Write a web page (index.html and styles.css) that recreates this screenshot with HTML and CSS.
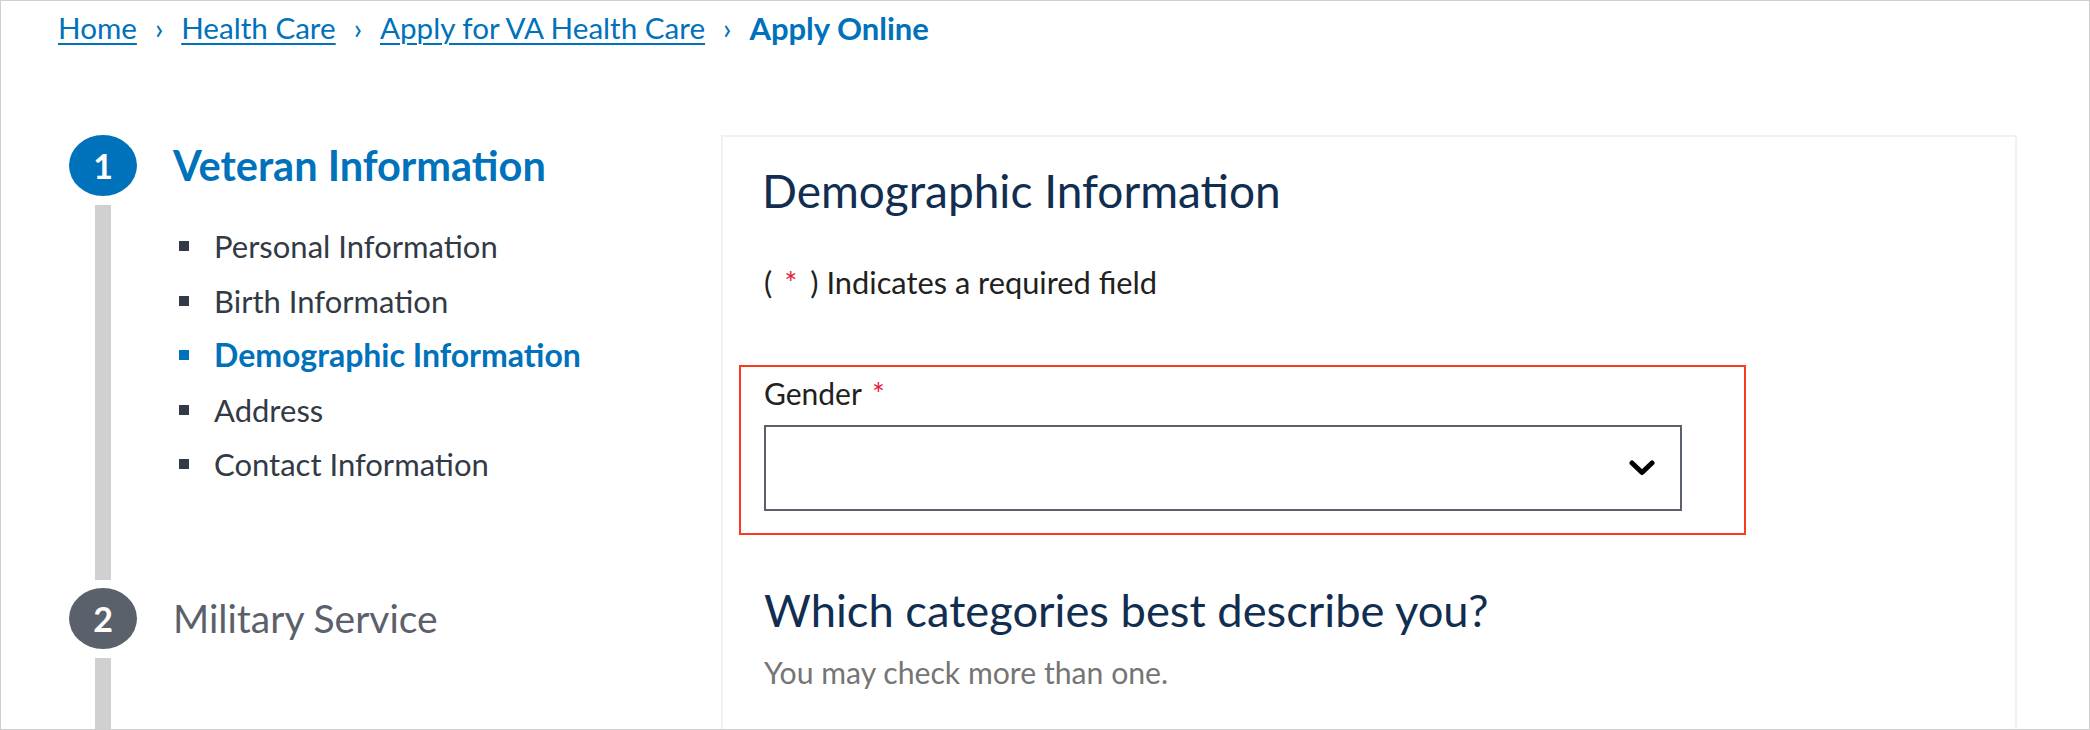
FILE: index.html
```html
<!DOCTYPE html>
<html lang="en">
<head>
<meta charset="utf-8">
<title>Apply Online - VA Health Care</title>
<link rel="stylesheet" href="styles.css">
</head>
<body>
<div class="frame">
  <nav class="breadcrumb">
    <a href="#">Home</a><span class="sep">›</span>
    <a href="#">Health Care</a><span class="sep">›</span>
    <a href="#">Apply for VA Health Care</a><span class="sep">›</span>
    <span class="current">Apply Online</span>
  </nav>

  <div class="layout">
    <div class="nav">
      <div class="step step-active">
        <div class="marker">
          <div class="circle circle-active">1</div>
          <div class="line"></div>
        </div>
        <div class="step-body">
          <div class="step-title step-title-active">Veteran Information</div>
          <ul class="substeps">
            <li>Personal Information</li>
            <li>Birth Information</li>
            <li class="current-sub">Demographic Information</li>
            <li>Address</li>
            <li>Contact Information</li>
          </ul>
        </div>
      </div>
      <div class="step step-next">
        <div class="marker">
          <div class="circle circle-inactive">2</div>
          <div class="line"></div>
        </div>
        <div class="step-body">
          <div class="step-title">Military Service</div>
        </div>
      </div>
    </div>

    <div class="card">
      <h2 class="card-title">Demographic Information</h2>
      <p class="required-note">(<span class="req req-note">*</span>) Indicates a required field</p>
      <div class="field-error">
        <label class="field-label">Gender <span class="req">*</span></label>
        <div class="select">
          <svg class="chevron" width="26" height="16" viewBox="0 0 26 16"><polyline points="3,3 13,12.5 23,3" fill="none" stroke="#000" stroke-width="5" stroke-linecap="round" stroke-linejoin="round"/></svg>
        </div>
      </div>
      <h3 class="question">Which categories best describe you?</h3>
      <p class="hint">You may check more than one.</p>
    </div>
  </div>
</div>
</body>
</html>
```

FILE: styles.css
```css
* { box-sizing: border-box; }

body {
  margin: 0;
  background: #fff;
  font-family: Lato, "Open Sans", sans-serif;
}

.frame {
  width: 2090px;
  height: 730px;
  border: 1px solid #cfcfcf;
  overflow: hidden;
  background: #fff;
}

/* Breadcrumb */
.breadcrumb {
  display: flex;
  align-items: center;
  padding: 6px 0 0 57px;
  height: 47px;
  font-size: 29.6px;
  line-height: 40px;
  color: #0071bb;
}
.breadcrumb a {
  color: #0071bb;
  text-decoration: underline;
  text-decoration-thickness: 2px;
  text-underline-offset: 4px;
}
.breadcrumb .sep {
  margin: 0 18px;
  color: #0071bb;
}
.breadcrumb .current {
  font-weight: 700;
  font-size: 31px;
}

/* Layout */
.layout {
  display: flex;
  padding-left: 68px;
  margin-top: 87px;
}

.nav {
  width: 652px;
  flex: none;
  padding-top: 0;
}

.step {
  display: flex;
}
.step-active {
  height: 453px;
}
.step-next {
  height: 400px;
}

.marker {
  width: 68px;
  flex: none;
  display: flex;
  flex-direction: column;
  align-items: center;
}
.circle {
  width: 68px;
  height: 61px;
  border-radius: 50%;
  display: flex;
  align-items: center;
  justify-content: center;
  color: #fff;
  font-weight: 700;
  font-size: 34px;
  flex: none;
}
.circle-active { background: #0071bb; }
.circle-inactive { background: #5b616b; }
.line {
  width: 16px;
  flex: 1;
  background: #d0d0d0;
  margin: 9px 0 8px;
}

.step-body {
  margin-left: 36px;
}
.step-title {
  font-size: 39px;
  line-height: 60px;
  color: #5b616b;
}
.step-title-active {
  font-size: 41.5px;
  font-weight: 700;
  color: #0071bb;
}

.substeps {
  list-style: none;
  margin: 24px 0 0;
  padding: 0;
  font-size: 31px;
  line-height: 54.5px;
  color: #323a45;
}
.substeps li {
  display: flex;
  align-items: center;
}
.substeps li::before {
  content: "";
  width: 10px;
  height: 10px;
  background: #323a45;
  margin: 0 25px 0 6px;
  flex: none;
}
.substeps .current-sub {
  font-size: 32px;
  font-weight: 700;
  color: #0071bb;
}
.substeps .current-sub::before {
  background: #0071bb;
}

/* Card */
.card {
  width: 1296px;
  flex: none;
  height: 700px;
  border: 2px solid #f1f1f1;
  border-bottom: none;
  padding: 26px 41px 0;
}
.card-title {
  margin: 0 0 0 -2px;
  font-size: 46px;
  line-height: 56px;
  font-weight: 400;
  color: #112e51;
}
.required-note {
  margin: 44px 0 0;
  font-size: 30.8px;
  line-height: 40px;
  color: #212121;
}
.req {
  color: #e31c3d;
}
.req-note {
  margin: 0 13px 0 12px;
}

.field-error {
  width: 1007px;
  margin: 62px 0 0 -25px;
  border: 2px solid #f83d1e;
  padding: 6px 23px 22px;
}
.field-label {
  display: block;
  font-size: 30px;
  line-height: 40px;
  color: #212121;
}
.field-label .req {
  margin-left: 3px;
}
.select {
  width: 918px;
  height: 86px;
  margin-top: 12px;
  border: 2px solid #5b616b;
  display: flex;
  align-items: center;
  justify-content: flex-end;
  padding-right: 25px;
}

.question {
  margin: 47px 0 0;
  font-size: 45.3px;
  line-height: 56px;
  font-weight: 400;
  color: #112e51;
}
.hint {
  margin: 14px 0 0;
  font-size: 30.2px;
  line-height: 40px;
  color: #757575;
}
```
